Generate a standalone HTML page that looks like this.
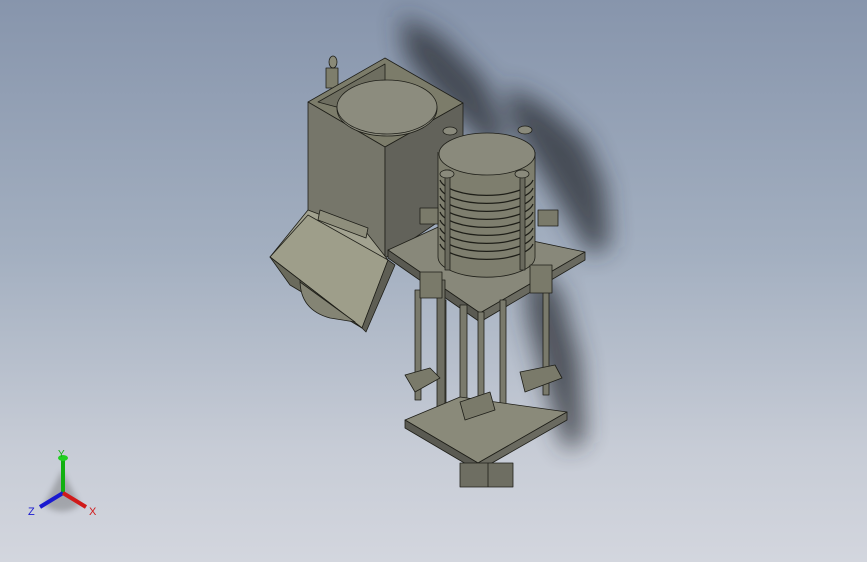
<!DOCTYPE html>
<html><head><meta charset="utf-8"><style>
html,body{margin:0;padding:0}
body{width:867px;height:562px;overflow:hidden;background:linear-gradient(#8795ac 0%,#a3afc0 45%,#c7ccd6 80%,#d3d6de 100%)}
svg{position:absolute;left:0;top:0}
</style></head><body>
<svg width="867" height="562" viewBox="0 0 867 562" xmlns="http://www.w3.org/2000/svg">
<defs>
<filter id="b" x="-50%" y="-50%" width="200%" height="200%"><feGaussianBlur stdDeviation="12"/></filter>
<filter id="b2" x="-50%" y="-50%" width="200%" height="200%"><feGaussianBlur stdDeviation="3"/></filter>
</defs>
<g filter="url(#b)" fill="#2a2e36" opacity="0.75">
<path d="M400 15 L440 35 L485 80 L505 130 L500 160 L470 130 L430 90 L405 55Z"/>
<path d="M505 85 L545 105 L585 140 L605 185 L610 245 L590 255 L560 205 L530 155 L510 120Z"/>
<path d="M525 260 L560 290 L580 360 L585 440 L565 450 L545 385 L528 320Z"/>
</g>
<g stroke="#1e1e18" stroke-width="0.8" stroke-linejoin="round">
<rect x="326" y="68" width="12" height="20" fill="#7e7e6c"/>
<ellipse cx="333" cy="62" rx="4" ry="6" fill="#8a8a78"/>
<polygon points="308,102 385,58 463,103 385,147" fill="#7c7c6a"/>
<polygon points="308,102 385,147 385,258 308,215" fill="#76766a"/>
<polygon points="385,147 463,103 463,205 385,258" fill="#62625a"/>
<polygon points="318,102 385,64 385,120" fill="#6e6e60"/>
<ellipse cx="387" cy="109" rx="50" ry="27" fill="#8c8c7e"/>
<ellipse cx="387" cy="107" rx="50" ry="27" fill="#8c8c7e"/>
<polygon points="270,257 308,210 366,232 388,260 362,328" fill="#a2a290"/>
<polygon points="270,257 362,328 388,260 308,215" fill="#9e9e8a"/>
<polygon points="270,257 290,285 362,328 300,280" fill="#6a6a5c"/>
<path d="M300 280 Q300 310 330 318 L355 322 L300 282Z" fill="#848474"/>
<polygon points="362,328 388,260 395,265 366,332" fill="#5e5e54"/>
<polygon points="320,210 368,228 366,238 318,220" fill="#8e8e7c"/>
<polygon points="388,250 447,223 585,252 480,313" fill="#88887a"/>
<polygon points="388,250 480,313 480,322 388,258" fill="#5a5a52"/>
<polygon points="480,313 585,252 585,260 480,322" fill="#6a6a60"/>
<g fill="#7a7a6c">
<rect x="415" y="290" width="6" height="110"/>
<rect x="440" y="300" width="6" height="110"/>
<rect x="460" y="305" width="7" height="130"/>
<rect x="478" y="312" width="6" height="120"/>
<rect x="500" y="300" width="6" height="110"/>
<rect x="543" y="285" width="6" height="110"/>
<rect x="437" y="280" width="8" height="160" fill="#6e6e62"/>
</g>
<polygon points="405,375 430,368 440,378 415,392" fill="#7a7a6a"/>
<polygon points="520,372 555,365 562,378 525,392" fill="#7a7a6a"/>
<polygon points="405,420 460,397 567,412 478,463" fill="#8a8a7a"/>
<polygon points="405,420 478,463 478,471 405,428" fill="#5a5a52"/>
<polygon points="478,463 567,412 567,420 478,471" fill="#6a6a60"/>
<polygon points="460,402 490,392 495,410 465,420" fill="#7a7a6a"/>
<rect x="460" y="463" width="53" height="24" fill="#6e6e62"/>
<line x1="488" y1="463" x2="488" y2="487"/>
<path d="M438 152 L438 257 A48 20 0 0 0 535 257 L535 152" fill="#7e7e6e"/>
<g fill="none" stroke="#1e1e18" stroke-width="1.2">
<path d="M440 180 A47 18 0 0 0 533 180"/><path d="M440 188 A47 18 0 0 0 533 188"/>
<path d="M440 196 A47 18 0 0 0 533 196"/><path d="M440 204 A47 18 0 0 0 533 204"/>
<path d="M440 212 A47 18 0 0 0 533 212"/><path d="M440 220 A47 18 0 0 0 533 220"/>
<path d="M440 228 A47 18 0 0 0 533 228"/><path d="M440 236 A47 18 0 0 0 533 236"/>
<path d="M440 244 A47 18 0 0 0 533 244"/>
</g>
<ellipse cx="487" cy="154" rx="48" ry="21" fill="#8a8a7c"/>
<rect x="445" y="170" width="5" height="100" fill="#6a6a5e"/>
<rect x="520" y="170" width="5" height="100" fill="#6a6a5e"/>
<ellipse cx="447" cy="174" rx="7" ry="4" fill="#8a8a7c"/>
<ellipse cx="522" cy="174" rx="7" ry="4" fill="#8a8a7c"/>
<ellipse cx="450" cy="131" rx="7" ry="4" fill="#8a8a7c"/>
<ellipse cx="525" cy="130" rx="7" ry="4" fill="#8a8a7c"/>
<rect x="420" y="208" width="18" height="16" fill="#7a7a6a"/>
<rect x="538" y="210" width="20" height="16" fill="#7a7a6a"/>
<rect x="530" y="265" width="22" height="28" fill="#7a7a6a"/>
<rect x="420" y="272" width="22" height="26" fill="#7a7a6a"/>
</g>
<g>
<path d="M62 470 L44 505 Q62 518 80 505Z" fill="#555" opacity="0.35" filter="url(#b2)"/>
<line x1="63" y1="493" x2="63" y2="460" stroke="#10b010" stroke-width="4"/>
<ellipse cx="63" cy="458" rx="5" ry="3" fill="#20d020"/>
<line x1="63" y1="493" x2="40" y2="507" stroke="#1a1ad0" stroke-width="4"/>
<line x1="63" y1="493" x2="86" y2="507" stroke="#d01a1a" stroke-width="4"/>
<text x="58" y="457" font-family="Liberation Sans,sans-serif" font-size="10" fill="#10b010">Y</text>
<text x="28" y="515" font-family="Liberation Sans,sans-serif" font-size="11" fill="#1a1ad0">Z</text>
<text x="89" y="515" font-family="Liberation Sans,sans-serif" font-size="11" fill="#d01a1a">X</text>
</g>
</svg>
</body></html>
